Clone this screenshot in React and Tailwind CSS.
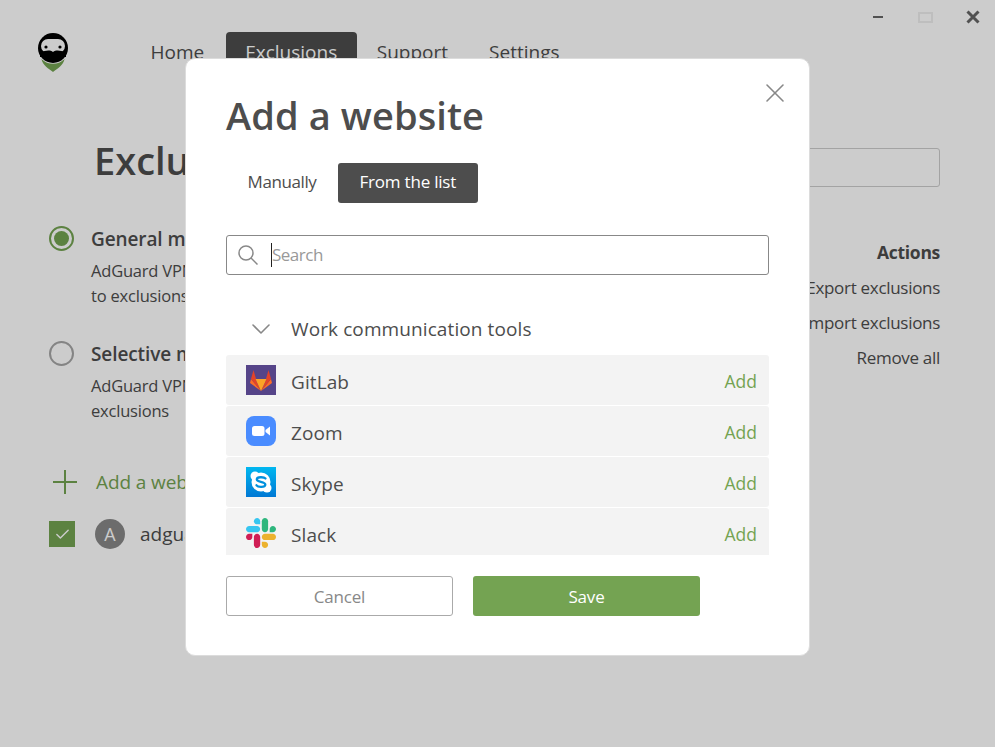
import React from "react";
import { X, Check, ChevronDown } from "lucide-react";

const Logo = () => (
  <svg width="32" height="42" viewBox="0 0 32 42">
    <path d="M4.500 27 L27.500 27 C26.500 33 20 37 16 40 C12 37 5.500 33 4.500 27 Z" fill="#74a352" />
    <circle cx="16" cy="16" r="15.800" fill="#fff" />
    <circle cx="16" cy="16" r="15" fill="#000" />
    <rect x="4" y="7" width="24" height="14" rx="7" fill="#fff" />
    <path d="M3 21 C9 18 13 18 16 20 C19 18 23 18 29 21 L29 25 L3 25 Z" fill="#000" />
    <circle cx="9" cy="15" r="1.600" fill="#000" />
    <circle cx="23" cy="15" r="1.600" fill="#000" />
  </svg>
);

const GitlabIcon = () => (
  <svg width="30" height="30" viewBox="0 0 30 30">
    <rect width="30" height="30" fill="#554488" />
    <path d="M15 26 L4 18 L5 14 Z" fill="#fc6d26" />
    <path d="M15 26 L26 18 L25 14 Z" fill="#fc6d26" />
    <path d="M15 26 L5 14 L9.500 14 Z" fill="#e24329" />
    <path d="M15 26 L25 14 L20.500 14 Z" fill="#e24329" />
    <path d="M5 14 L7.500 5 L10 14 Z" fill="#e24329" />
    <path d="M25 14 L22.500 5 L20 14 Z" fill="#e24329" />
    <path d="M9.500 14 L15 26 L20.500 14 Z" fill="#fca326" />
  </svg>
);

const ZoomIcon = () => (
  <svg width="30" height="30" viewBox="0 0 30 30">
    <rect width="30" height="30" rx="8" fill="#4a8cff" />
    <rect x="6" y="10" width="12.500" height="10" rx="2.500" fill="#fff" />
    <path d="M19.500 14 L24 10.500 V19.500 L19.500 16 Z" fill="#fff" />
  </svg>
);

const SkypeIcon = () => (
  <svg width="30" height="30" viewBox="0 0 30 30">
    <defs>
      <linearGradient id="skypeBg" x1="0" y1="0" x2="0" y2="1">
        <stop offset="0" stopColor="#00b7f0" />
        <stop offset="1" stopColor="#0078d4" />
      </linearGradient>
    </defs>
    <rect width="30" height="30" fill="url(#skypeBg)" />
    <circle cx="15" cy="15" r="9.500" fill="#fff" />
    <circle cx="9" cy="9" r="4.500" fill="#fff" />
    <circle cx="21" cy="21" r="4.500" fill="#fff" />
    <path d="M19.500 11.500 C18 9.800 11 9.600 10.800 12.300 C10.700 15.600 19.500 14 19.300 17.800 C19 20.500 12 20.500 10.500 18.300" fill="none" stroke="#0090dd" strokeWidth="2.300" strokeLinecap="round" />
  </svg>
);

const SlackIcon = () => (
  <svg width="30" height="30" viewBox="0 0 122.800 122.800">
    <path d="M25.800 77.600c0 7.100-5.800 12.900-12.900 12.900S0 84.700 0 77.600s5.800-12.900 12.900-12.900h12.900v12.900z" fill="#D01E55" />
    <path d="M32.300 77.600c0-7.100 5.800-12.900 12.900-12.900s12.900 5.800 12.900 12.900v32.300c0 7.100-5.800 12.900-12.900 12.900s-12.900-5.800-12.900-12.900V77.600z" fill="#D01E55" />
    <path d="M45.200 25.800c-7.100 0-12.900-5.800-12.900-12.900S38.100 0 45.200 0s12.900 5.800 12.900 12.900v12.900H45.200z" fill="#36C5F0" />
    <path d="M45.200 32.300c7.100 0 12.900 5.800 12.900 12.900s-5.800 12.900-12.900 12.900H12.900C5.800 58.100 0 52.300 0 45.200s5.800-12.900 12.900-12.900h32.300z" fill="#36C5F0" />
    <path d="M97 45.200c0-7.100 5.800-12.900 12.900-12.900s12.900 5.800 12.900 12.900-5.800 12.900-12.900 12.900H97V45.200z" fill="#2EB67D" />
    <path d="M90.500 45.200c0 7.100-5.800 12.900-12.900 12.900s-12.900-5.800-12.900-12.900V12.900C64.700 5.800 70.500 0 77.600 0s12.900 5.800 12.900 12.900v32.300z" fill="#2EB67D" />
    <path d="M77.600 97c7.100 0 12.900 5.800 12.900 12.900s-5.800 12.900-12.900 12.900-12.900-5.800-12.900-12.900V97h12.900z" fill="#ECB22E" />
    <path d="M77.600 90.500c-7.100 0-12.900-5.800-12.900-12.900s5.800-12.900 12.900-12.900h32.300c7.100 0 12.900 5.800 12.900 12.900s-5.800 12.900-12.900 12.900H77.600z" fill="#ECB22E" />
  </svg>
);

const services = [
  { name: "GitLab", icon: <GitlabIcon /> },
  { name: "Zoom", icon: <ZoomIcon /> },
  { name: "Skype", icon: <SkypeIcon /> },
  { name: "Slack", icon: <SlackIcon /> },
];

const App = () => {
  return (
    <div className="relative h-[747px] w-[995px] overflow-hidden bg-white font-['Open_Sans',sans-serif] text-[#4d4d4d]">
      {/* app behind the modal */}
      <div className="flex h-[32px] items-start justify-end">
        <div className="mt-[16px] h-[2px] w-[10px] bg-[#666]" />
        <div className="ml-[35px] mt-[12px] h-[11px] w-[15px] border-2 border-[#eee]" />
        <svg width="14" height="14" viewBox="0 0 14 14" className="ml-[33px] mr-[15px] mt-[10px] text-[#666]">
          <path d="M1.500 1.500 L12.500 12.500 M12.500 1.500 L1.500 12.500" stroke="currentColor" strokeWidth="3" />
        </svg>
      </div>
      <div className="flex items-start pl-[37px]">
        <Logo />
        <nav className="ml-[60px] flex text-[19px]">
          <span className="px-[21.500px] py-[5px] leading-[30px]">Home</span>
          <span className="rounded-t-[4px] bg-[#4d4d4d] px-[19.500px] py-[5px] leading-[30px] text-white">Exclusions</span>
          <span className="pl-[20px] pr-[21px] py-[5px] leading-[30px]">Support</span>
          <span className="px-[20px] py-[5px] leading-[30px]">Settings</span>
        </nav>
      </div>
      <div className="pl-[49px] pr-[55px]">
        <div className="mt-[66px] flex items-start justify-between pl-[45px]">
          <h1 className="text-[38px] font-semibold leading-[40px]">Exclusions</h1>
          <div className="mt-[8px] h-[39px] w-[400px] rounded-[3px] border border-[#ccc]" />
        </div>
        <div className="mt-[38px] flex justify-between">
          <div className="w-[500px]">
            <div className="flex gap-[17px]">
              <div className="mt-px flex h-[25px] w-[25px] items-center justify-center rounded-full border-2 border-[#74a352]">
                <div className="h-[15px] w-[15px] rounded-full bg-[#74a352]" />
              </div>
              <div className="text-[16.500px] leading-[25px] tracking-[-0.2px]">
                <div className="text-[19px] font-semibold leading-[28px] tracking-[-0.1px]">General mode</div>
                <p className="mt-[5px]">AdGuard VPN works everywhere except websites added</p>
                <p>to exclusions</p>
              </div>
            </div>
            <div className="mt-[32px] flex gap-[17px]">
              <div className="mt-px h-[25px] w-[25px] rounded-full border-2 border-[#a6a6a6]" />
              <div className="text-[16.500px] leading-[25px] tracking-[-0.2px]">
                <div className="text-[19px] font-semibold leading-[28px] tracking-[-0.1px]">Selective mode</div>
                <p className="mt-[5px]">AdGuard VPN works only on websites added to</p>
                <p>exclusions</p>
              </div>
            </div>
            <div className="mt-[44px] flex items-center text-[19px] text-[#74a352]">
              <svg width="26" height="26" viewBox="0 0 26 26" className="ml-[3px] mr-[18px]">
                <path d="M13 1 V25 M1 13 H25" stroke="currentColor" strokeWidth="2" />
              </svg>
              <span className="leading-[30px] tracking-[-0.1px]">Add a website</span>
            </div>
            <div className="mt-[22px] flex items-center">
              <div className="flex h-[26px] w-[26px] items-center justify-center bg-[#74a352]">
                <Check size={17} strokeWidth={2} className="text-white" />
              </div>
              <div className="ml-[20px] flex h-[30px] w-[30px] items-center justify-center rounded-full bg-[#888] text-[18px] text-white">A</div>
              <span className="ml-[15px] text-[19px]">adguard.com</span>
            </div>
          </div>
          <div className="mt-[10px] flex flex-col items-end text-[17px] leading-[35px] tracking-[-0.3px]">
            <span className="text-[17.500px] font-bold">Actions</span>
            <span>Export exclusions</span>
            <span>Import exclusions</span>
            <span>Remove all</span>
          </div>
        </div>
      </div>

      {/* dimmed overlay + modal */}
      <div className="absolute inset-0 bg-black/20" />
      <div className="absolute left-[185px] top-[58px] h-[598px] w-[625px] rounded-[10px] border border-[#dcdcdc] bg-white px-[40px]">
        <button className="absolute right-[18px] top-[18px] text-[#888]">
          <X size={32} strokeWidth={1.200} />
        </button>
        <h2 className="mt-[32px] text-[38px] font-semibold leading-[48px] tracking-[0.1px]">Add a website</h2>
        <div className="mt-[24px] flex text-[17px]">
          <span className="flex h-[40px] items-center px-[21.500px] pb-[2px] tracking-[-0.4px]">Manually</span>
          <span className="flex h-[40px] items-center rounded-[3px] bg-[#4d4d4d] px-[21.500px] pb-[2px] tracking-[-0.2px] text-white">From the list</span>
        </div>
        <div className="mt-[32px] flex h-[40px] w-[543px] items-center rounded-[3px] border border-[#888] pl-[11px]">
          <svg width="20" height="20" viewBox="0 0 20 20" className="text-[#888]">
            <circle cx="8" cy="8" r="7" fill="none" stroke="currentColor" strokeWidth="1.500" />
            <path d="M13 13 L19.500 19.500" stroke="currentColor" strokeWidth="1.500" />
          </svg>
          <div className="ml-[13px] h-[24px] w-px bg-[#222]" />
          <span className="text-[17px] tracking-[-0.5px] text-[#999]">Search</span>
        </div>
        <div className="mt-[30px] h-[250px] w-[543px] overflow-hidden">
          <div className="mb-[2px] flex h-[48px] items-center pl-[19px] text-[19px] tracking-[0.1px]">
            <ChevronDown size={32} strokeWidth={1.200} className="mr-[14px] text-[#888]" />
            <span>Work communication tools</span>
          </div>
          {services.map((s) => (
            <div key={s.name} className="mb-px flex h-[50px] items-center rounded-[3px] bg-[#f3f3f3] pl-[20px] pr-[12px]">
              {s.icon}
              <span className="ml-[15px] mt-[4px] flex-1 text-[19px] tracking-[0.1px]">{s.name}</span>
              <span className="mt-[2px] text-[17.500px] text-[#74a352]">Add</span>
            </div>
          ))}
        </div>
        <div className="mt-[21px] flex gap-[20px] text-[17px] tracking-[-0.2px]">
          <button className="h-[40px] w-[227px] rounded-[3px] border border-[#aaa] pt-[2px] text-[#888]">Cancel</button>
          <button className="h-[40px] w-[227px] rounded-[3px] bg-[#74a352] pt-[2px] text-white">Save</button>
        </div>
      </div>
    </div>
  );
};

export default App;
